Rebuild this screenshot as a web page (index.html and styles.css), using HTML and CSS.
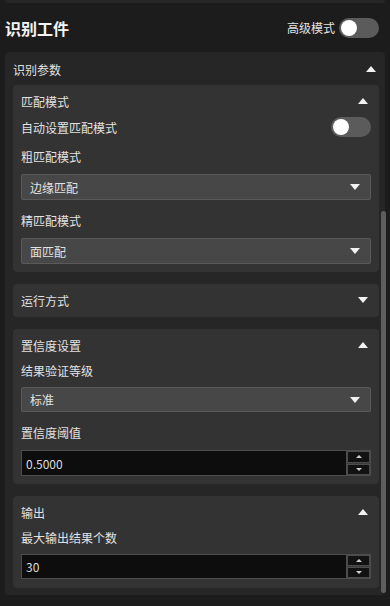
FILE: index.html
```html
<!DOCTYPE html>
<html lang="zh">
<head>
<meta charset="utf-8">
<link rel="stylesheet" href="styles.css">
</head>
<body>
<div class="stub"></div>
<div class="titlebar">
  <div class="title">识别工件</div>
  <div class="adv"><span>高级模式</span><span class="toggle"><span class="knob"></span></span></div>
</div>
<div class="outer">
  <div class="outer-head"><span>识别参数</span><span class="caret up"></span></div>
  <div class="panel">
    <div class="phead"><span>匹配模式</span><span class="caret up"></span></div>
    <div class="row-toggle"><span>自动设置匹配模式</span><span class="toggle"><span class="knob"></span></span></div>
    <div class="label first">粗匹配模式</div>
    <div class="select"><span>边缘匹配</span><span class="caret down"></span></div>
    <div class="label">精匹配模式</div>
    <div class="select"><span>面匹配</span><span class="caret down"></span></div>
  </div>
  <div class="panel collapsed">
    <div class="phead"><span>运行方式</span><span class="caret down"></span></div>
  </div>
  <div class="panel">
    <div class="phead"><span>置信度设置</span><span class="caret up"></span></div>
    <div class="label top">结果验证等级</div>
    <div class="select short"><span>标准</span><span class="caret down"></span></div>
    <div class="label">置信度阈值</div>
    <div class="num"><span class="val">0.5000</span><span class="spins"><span class="spin"><span class="tri-up"></span></span><span class="spin"><span class="tri-down"></span></span></span></div>
  </div>
  <div class="panel last">
    <div class="phead"><span>输出</span><span class="caret up"></span></div>
    <div class="label top">最大输出结果个数</div>
    <div class="num short"><span class="val">30</span><span class="spins"><span class="spin"><span class="tri-up"></span></span><span class="spin"><span class="tri-down"></span></span></span></div>
  </div>
  <div class="thumb"></div>
</div>
</body>
</html>
```
FILE: styles.css
```css
* { box-sizing: border-box; }
html, body { margin: 0; padding: 0; }
body {
  background: #1c1c1c;
  color: #e2e2e2;
  font-family: "Noto Sans CJK SC", "Noto Sans", sans-serif;
  font-size: 12px;
  width: 390px;
  height: 606px;
  overflow: hidden;
}
.stub {
  height: 3px;
  margin: 0 5px;
  background: #262626;
  border-radius: 0 0 4px 4px;
}
.titlebar {
  height: 49px;
  display: flex;
  align-items: center;
  justify-content: space-between;
  padding: 0 11px 0 5px;
}
.title {
  font-size: 16px;
  font-weight: 700;
  color: #f4f4f4;
}
.adv {
  display: flex;
  align-items: center;
  gap: 4px;
  font-size: 12px;
}
.toggle {
  display: inline-flex;
  align-items: center;
  width: 40px;
  height: 20px;
  border-radius: 10px;
  background: #5b5b5b;
  padding-left: 2px;
}
.knob {
  width: 16px;
  height: 16px;
  border-radius: 50%;
  background: #ffffff;
}
.outer {
  position: relative;
  margin: 0 5px;
  background: #262626;
  border-radius: 4px;
  padding: 0 6px 7px 8px;
  height: 543px;
}
.outer-head {
  height: 33px;
  display: flex;
  align-items: center;
  justify-content: space-between;
  padding: 1px 3px 0 0;
}
.caret {
  width: 0;
  height: 0;
  border-left: 5px solid transparent;
  border-right: 5px solid transparent;
}
.caret.up { border-bottom: 6px solid #f2f2f2; }
.caret.down { border-top: 6px solid #f2f2f2; }
.panel {
  background: #333333;
  border-radius: 4px;
  padding: 0 8px 8px 8px;
  margin-bottom: 12px;
}
.panel.collapsed { padding-bottom: 3px; }
.panel.last { padding-bottom: 9px; }
.phead {
  height: 30px;
  padding-top: 2px;
  display: flex;
  align-items: center;
  justify-content: space-between;
  padding-right: 3px;
}
.row-toggle {
  height: 24px;
  display: flex;
  align-items: center;
  justify-content: space-between;
}
.label {
  height: 24px;
  line-height: 24px;
  margin-top: 9px;
}
.label.first { margin-top: 6px; }
.label.top { margin-top: 0; }
.select {
  margin-top: 5px;
  height: 26px;
  background: #474747;
  border: 1px solid #5a5a5a;
  border-radius: 2px;
  display: flex;
  align-items: center;
  justify-content: space-between;
  padding: 0 10px 0 8px;
}
.num {
  margin-top: 5px;
  height: 26px;
  display: flex;
  background: #0d0d0d;
  border: 1px solid #4c4c4c;
}
.label.top + .select,
.label.top + .num { margin-top: 4px; }
.select.short,
.num.short { height: 25px; }
.val {
  flex: 1;
  display: flex;
  align-items: center;
  padding-left: 4px;
  color: #dcdcdc;
}
.spins {
  width: 24px;
  display: flex;
  flex-direction: column;
  background: #3a3a3a;
  gap: 1px;
  border-left: 1px solid #4c4c4c;
}
.spin {
  flex: 1;
  background: #121212;
  border: 1px solid #4c4c4c;
  display: flex;
  align-items: center;
  justify-content: center;
}
.tri-up {
  width: 0; height: 0;
  border-left: 3px solid transparent;
  border-right: 3px solid transparent;
  border-bottom: 3px solid #d0d0d0;
}
.tri-down {
  width: 0; height: 0;
  border-left: 3px solid transparent;
  border-right: 3px solid transparent;
  border-top: 3px solid #d0d0d0;
}
.thumb {
  position: absolute;
  right: -1px;
  top: 159px;
  width: 5px;
  height: 382px;
  border-radius: 3px;
  background: #5e5e5e;
}
```
